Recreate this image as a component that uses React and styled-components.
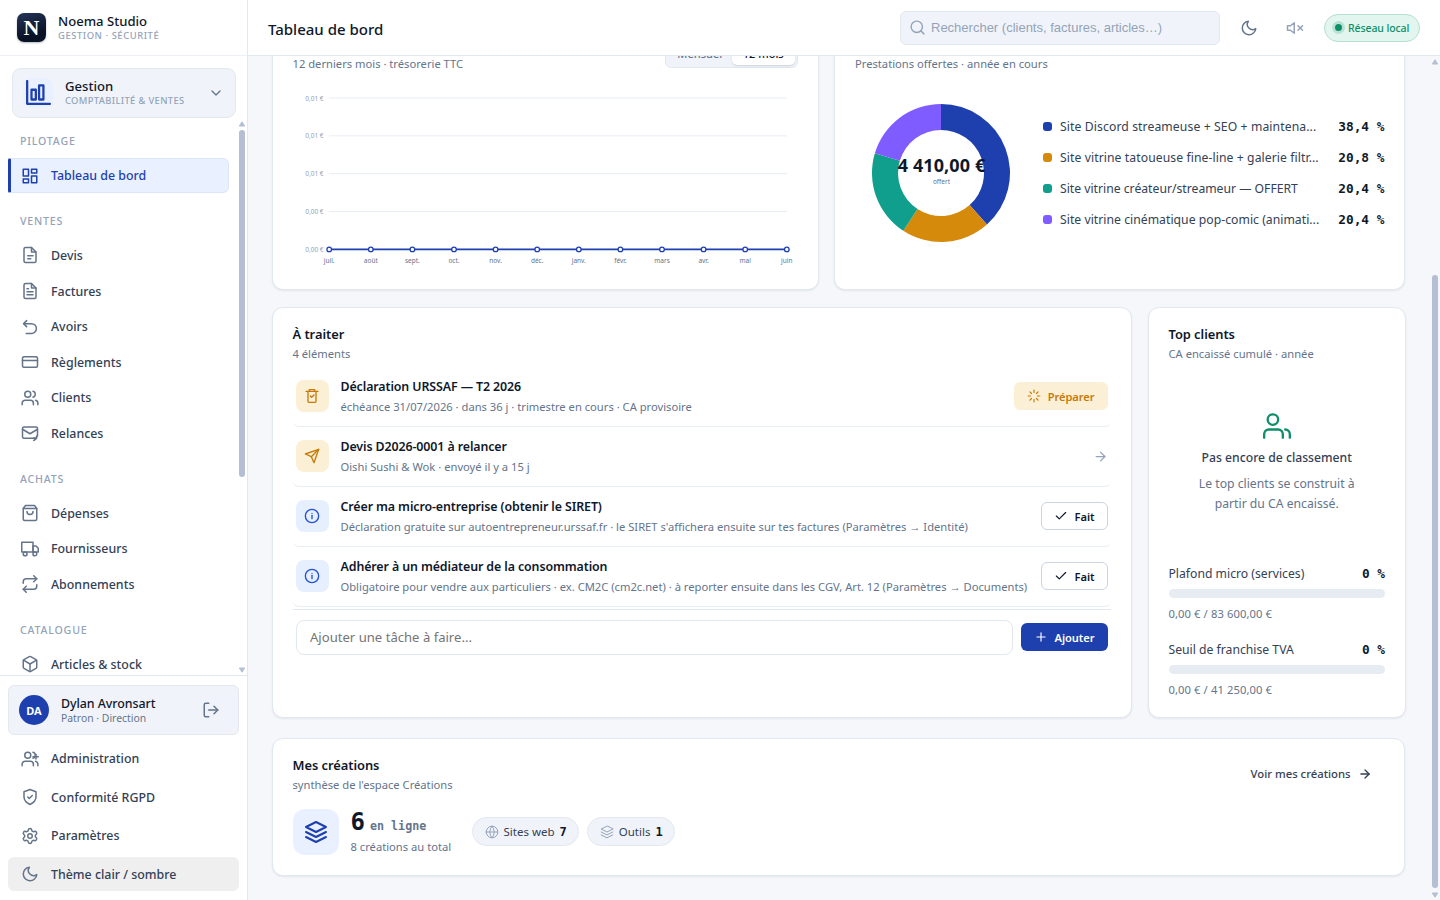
import { styled, createGlobalStyle, css } from 'styled-components';

const sans = `'Noto Sans', 'Open Sans', sans-serif`;
const mono = `'DejaVu Sans Mono', 'Liberation Mono', monospace`;

const color = {
  blue: '#1e40af',
  ink: '#0f172a',
  text: '#334155',
  muted: '#64748b',
  soft: '#94a3b8',
  line: '#e2e8f0',
  panel: '#f0f4fa',
  tint: '#e9f0ff',
  amber: '#c77a08',
  amberBg: '#fbefd5',
  green: '#0f8f69',
};

const icons = {
  dashboard: ['M3 3h7v9H3z', 'M14 3h7v5h-7z', 'M14 12h7v9h-7z', 'M3 16h7v5H3z'],
  quote: ['M14 2H6a2 2 0 0 0-2 2v16a2 2 0 0 0 2 2h12a2 2 0 0 0 2-2V8z', 'M14 2v6h6', 'M9 13h7', 'M9 17h4'],
  invoice: ['M14 2H6a2 2 0 0 0-2 2v16a2 2 0 0 0 2 2h12a2 2 0 0 0 2-2V8z', 'M14 2v6h6', 'M8 13h8', 'M8 17h8', 'M8 9h2'],
  undo: ['M7.5 3.5l-4 4 4 4', 'M3.5 7.5H14a6.5 6.5 0 0 1 0 13H7'],
  card: ['M4 5h16a2 2 0 0 1 2 2v10a2 2 0 0 1-2 2H4a2 2 0 0 1-2-2V7a2 2 0 0 1 2-2z', 'M2 10h20'],
  users: ['M5 7a4 4 0 1 0 8 0a4 4 0 1 0-8 0', 'M1.5 21v-2a4 4 0 0 1 4-4h7a4 4 0 0 1 4 4v2', 'M16 3.13a4 4 0 0 1 0 7.75', 'M22.5 21v-2a4 4 0 0 0-3-3.87'],
  admin: ['M5 7a4 4 0 1 0 8 0a4 4 0 1 0-8 0', 'M1.5 21v-2a4 4 0 0 1 4-4h7a4 4 0 0 1 4 4v2', 'M16 3.13a4 4 0 0 1 0 7.75', 'M16 9h7', 'M20 6v6', 'M22.5 21v-2a4 4 0 0 0-3-3.87'],
  mail: ['M18 19H4a2 2 0 0 1-2-2V6a2 2 0 0 1 2-2h16a2 2 0 0 1 2 2v10', 'M2 7l10 6 10-6', 'M21 16c0 3-1.5 5-4 6', 'M17 18.5h4'],
  bag: ['M6 2L3 6v14a2 2 0 0 0 2 2h14a2 2 0 0 0 2-2V6l-3-4z', 'M3 6h18', 'M16 10a4 4 0 0 1-8 0'],
  truck: ['M1 3h15v13H1z', 'M16 8h4l3 3v5h-7z', 'M3 18.5a2.5 2.5 0 1 0 5 0a2.5 2.5 0 1 0-5 0', 'M16 18.5a2.5 2.5 0 1 0 5 0a2.5 2.5 0 1 0-5 0'],
  repeat: ['M17 1l4 4-4 4', 'M3 11V9a4 4 0 0 1 4-4h14', 'M7 23l-4-4 4-4', 'M21 13v2a4 4 0 0 1-4 4H3'],
  box: ['M21 16V8a2 2 0 0 0-1-1.73l-7-4a2 2 0 0 0-2 0l-7 4A2 2 0 0 0 3 8v8a2 2 0 0 0 1 1.73l7 4a2 2 0 0 0 2 0l7-4A2 2 0 0 0 21 16z', 'M3.27 6.96L12 12.01l8.73-5.05', 'M12 22.08V12'],
  shield: ['M12 22s8-4 8-10V5l-8-3-8 3v7c0 6 8 10 8 10z', 'M9 12l2 2 4-4'],
  gear: [
    'M9 12a3 3 0 1 0 6 0a3 3 0 1 0-6 0',
    'M9.671 4.136a2.34 2.34 0 0 1 4.659 0 2.34 2.34 0 0 0 3.319 1.915 2.34 2.34 0 0 1 2.33 4.033 2.34 2.34 0 0 0 0 3.831 2.34 2.34 0 0 1-2.33 4.033 2.34 2.34 0 0 0-3.319 1.915 2.34 2.34 0 0 1-4.659 0 2.34 2.34 0 0 0-3.32-1.915 2.34 2.34 0 0 1-2.33-4.033 2.34 2.34 0 0 0 0-3.831A2.34 2.34 0 0 1 6.35 6.051a2.34 2.34 0 0 0 3.319-1.915',
  ],
  moon: ['M21 12.79A9 9 0 1 1 11.21 3 7 7 0 0 0 21 12.79z'],
  logout: ['M9 21H5a2 2 0 0 1-2-2V5a2 2 0 0 1 2-2h4', 'M16 17l5-5-5-5', 'M21 12H9'],
  ledger: ['M2 1v21h21', 'M6 9h4v9H6z', 'M13 5h4v13h-4z'],
  chevron: ['M6 9l6 6 6-6'],
  search: ['M3 11a8 8 0 1 0 16 0a8 8 0 1 0-16 0', 'M21 21l-4.3-4.3'],
  mute: ['M11 5L6 9H2v6h4l5 4z', 'M22 9l-6 6', 'M16 9l6 6'],
  tax: ['M3 5h18', 'M8 5V2.5h8V5', 'M6 5v15a1.5 1.5 0 0 0 1.5 1.5h9A1.5 1.5 0 0 0 18 20V5', 'M9.5 12l2 2 3.5-3.5'],
  send: ['M22 2L11 13', 'M22 2l-7 20-4-9-9-4z'],
  info: ['M2 12a10 10 0 1 0 20 0a10 10 0 1 0-20 0', 'M12 16v-5', 'M12 8h.01'],
  loader: ['M12 2v4', 'M12 18v4', 'M4.93 4.93l2.83 2.83', 'M16.24 16.24l2.83 2.83', 'M2 12h4', 'M18 12h4', 'M4.93 19.07l2.83-2.83', 'M16.24 7.76l2.83-2.83'],
  arrow: ['M5 12h14', 'M12 5l7 7-7 7'],
  check: ['M20 6L9 17l-5-5'],
  plus: ['M12 5v14', 'M5 12h14'],
  people: ['M4 6.5a4.5 4.5 0 1 0 9 0a4.5 4.5 0 1 0-9 0', 'M1 22v-3a4 4 0 0 1 4-4h8a4 4 0 0 1 4 4v3', 'M19 15a4 4 0 0 1 4 4v3'],
  layers: ['M12 2L2 7l10 5 10-5z', 'M2 17l10 5 10-5', 'M2 12l10 5 10-5'],
  globe: ['M2 12a10 10 0 1 0 20 0a10 10 0 1 0-20 0', 'M2 12h20', 'M12 2a15 15 0 0 1 0 20a15 15 0 0 1 0-20'],
};

const Icon = ({ name, size = 18, stroke = 2 }) => (
  <Glyph width={size} height={size} viewBox="0 0 24 24" strokeWidth={stroke}>
    {icons[name].map((d) => (
      <path key={d} d={d} />
    ))}
  </Glyph>
);

const ScrollBar = ({ before, size, wide }) => (
  <Track $wide={wide}>
    <Arrow width="8" height="6" viewBox="0 0 8 6">
      <path d="M4 .8L6.7 5H1.3z" />
    </Arrow>
    <Gap $size={before} />
    <Thumb $size={size} />
    <Gap />
    <Arrow width="8" height="6" viewBox="0 0 8 6">
      <path d="M4 5.2L6.7 1H1.3z" />
    </Arrow>
  </Track>
);

const menu = [
  { label: 'PILOTAGE', items: [['dashboard', 'Tableau de bord', true]] },
  {
    label: 'VENTES',
    items: [
      ['quote', 'Devis'],
      ['invoice', 'Factures'],
      ['undo', 'Avoirs'],
      ['card', 'Règlements'],
      ['users', 'Clients'],
      ['mail', 'Relances'],
    ],
  },
  {
    label: 'ACHATS',
    items: [
      ['bag', 'Dépenses'],
      ['truck', 'Fournisseurs'],
      ['repeat', 'Abonnements'],
    ],
  },
  { label: 'CATALOGUE', items: [['box', 'Articles & stock']] },
];

const footerMenu = [
  ['admin', 'Administration'],
  ['shield', 'Conformité RGPD'],
  ['gear', 'Paramètres'],
  ['moon', 'Thème clair / sombre', true],
];

const Sidebar = () => (
  <SidebarContainer>
    <Brand>
      <Logo>N</Logo>
      <BrandText>
        <BrandName>Noema Studio</BrandName>
        <Caps>GESTION · SÉCURITÉ</Caps>
      </BrandText>
    </Brand>
    <ModuleCard>
      <ModuleIcon>
        <Icon name="ledger" size={26} stroke={2.1} />
      </ModuleIcon>
      <BrandText>
        <BrandName>Gestion</BrandName>
        <Caps $tight>COMPTABILITÉ & VENTES</Caps>
      </BrandText>
      <Icon name="chevron" size={16} stroke={2} />
    </ModuleCard>
    <NavArea>
      <Nav>
        {menu.map((group) => (
          <NavGroup key={group.label}>
            <NavLabel>{group.label}</NavLabel>
            {group.items.map(([icon, label, active]) => (
              <NavItem key={label} $active={active}>
                <Icon name={icon} />
                {label}
              </NavItem>
            ))}
          </NavGroup>
        ))}
      </Nav>
      <ScrollBar before={3} size={347} />
    </NavArea>
    <SidebarFooter>
      <UserCard>
        <Avatar>DA</Avatar>
        <UserText>
          <UserName>Dylan Avronsart</UserName>
          <UserRole>Patron · Direction</UserRole>
        </UserText>
        <Icon name="logout" />
      </UserCard>
      {footerMenu.map(([icon, label, hover]) => (
        <FooterItem key={label} $hover={hover}>
          <Icon name={icon} />
          {label}
        </FooterItem>
      ))}
    </SidebarFooter>
  </SidebarContainer>
);

const Header = () => (
  <HeaderContainer>
    <PageTitle>Tableau de bord</PageTitle>
    <Search>
      <Icon name="search" size={17} stroke={2} />
      Rechercher (clients, factures, articles…)
    </Search>
    <HeaderBtn>
      <Icon name="moon" size={18} />
    </HeaderBtn>
    <HeaderBtn $muted>
      <Icon name="mute" size={18} />
    </HeaderBtn>
    <Network>
      <Dot />
      Réseau local
    </Network>
  </HeaderContainer>
);

const months = ['juil.', 'août', 'sept.', 'oct.', 'nov.', 'déc.', 'janv.', 'févr.', 'mars', 'avr.', 'mai', 'juin'];
const ticks = ['0,01 €', '0,01 €', '0,01 €', '0,00 €', '0,00 €'];

const LineChart = () => {
  const x = (i) => 36.2 + i * 41.6;
  const y = (i) => 14 + i * 37.85;
  return (
    <ChartSvg width="505" height="190" viewBox="0 0 505 190">
      {ticks.map((tick, i) => (
        <g key={i}>
          <line x1="36" x2="494" y1={y(i)} y2={y(i)} stroke="#e8edf3" />
          <AxisText x="30.6" y={y(i) + 2.6} textAnchor="end" $light>
            {tick}
          </AxisText>
        </g>
      ))}
      <line x1="36" x2="494" y1={y(4)} y2={y(4)} stroke={color.blue} strokeWidth="1.6" />
      {months.map((month, i) => (
        <g key={month}>
          <circle cx={x(i)} cy={y(4)} r="2.3" fill="#fff" stroke={color.blue} strokeWidth="1.3" />
          <AxisText x={x(i)} y="179" textAnchor="middle">
            {month}
          </AxisText>
        </g>
      ))}
    </ChartSvg>
  );
};

const shares = [
  { label: 'Site Discord streameuse + SEO + maintena...', value: 38.4, fill: '#1e40af', spacing: 0.1 },
  { label: 'Site vitrine tatoueuse fine-line + galerie filtr...', value: 20.8, fill: '#d68a0c', spacing: 0.08 },
  { label: 'Site vitrine créateur/streameur — OFFERT', value: 20.4, fill: '#109f8c', spacing: 0 },
  { label: 'Site vitrine cinématique pop-comic (animati...', value: 20.4, fill: '#7f5cff', spacing: 0.03 },
];

const Donut = () => {
  const point = (r, pct) => {
    const a = (pct / 100) * Math.PI * 2;
    return `${70 + r * Math.sin(a)} ${70 - r * Math.cos(a)}`;
  };
  let from = 0;
  return (
    <DonutSvg width="140" height="140" viewBox="0 0 140 140">
      {shares.map(({ label, value, fill }) => {
        const start = from;
        from += value;
        return (
          <path
            key={label}
            fill={fill}
            d={`M${point(69, start)}A69 69 0 0 1 ${point(69, from)}L${point(43, from)}A43 43 0 0 0 ${point(43, start)}Z`}
          />
        );
      })}
      <DonutTotal x="70.5" y="68.5" textAnchor="middle">
        4 410,00 €
      </DonutTotal>
      <AxisText x="70.5" y="81" textAnchor="middle">
        offert
      </AxisText>
    </DonutSvg>
  );
};

const tasks = [
  { icon: 'tax', tone: 'amber', title: 'Déclaration URSSAF — T2 2026', sub: 'échéance 31/07/2026 · dans 36 j · trimestre en cours · CA provisoire', action: 'prepare' },
  { icon: 'send', tone: 'amber', title: 'Devis D2026-0001 à relancer', sub: 'Oishi Sushi & Wok · envoyé il y a 15 j', action: 'open' },
  {
    icon: 'info',
    tone: 'blue',
    title: 'Créer ma micro-entreprise (obtenir le SIRET)',
    sub: "Déclaration gratuite sur autoentrepreneur.urssaf.fr · le SIRET s'affichera ensuite sur tes factures (Paramètres → Identité)",
    action: 'done',
  },
  {
    icon: 'info',
    tone: 'blue',
    title: 'Adhérer à un médiateur de la consommation',
    sub: 'Obligatoire pour vendre aux particuliers · ex. CM2C (cm2c.net) · à reporter ensuite dans les CGV, Art. 12 (Paramètres → Documents)',
    action: 'done',
  },
];

const TaskAction = ({ action }) => {
  if (action === 'prepare')
    return (
      <Button $kind="amber">
        <Icon name="loader" size={14} stroke={2} />
        Préparer
      </Button>
    );
  if (action === 'open')
    return (
      <OpenMark>
        <Icon name="arrow" size={15} stroke={2} />
      </OpenMark>
    );
  return (
    <Button $kind="outline">
      <Icon name="check" size={14} stroke={2} />
      Fait
    </Button>
  );
};

const limits = [
  { label: 'Plafond micro (services)', detail: '0,00 € / 83 600,00 €' },
  { label: 'Seuil de franchise TVA', detail: '0,00 € / 41 250,00 €' },
];

const Dashboard = () => (
  <Board>
    <ChartRow>
      <Card $cut>
        <CutHead>
          <CardSub>12 derniers mois · trésorerie TTC</CardSub>
          <Segment>
            <SegmentItem>Mensuel</SegmentItem>
            <SegmentItem $on>12 mois</SegmentItem>
          </Segment>
        </CutHead>
        <LineChart />
      </Card>
      <Card $cut>
        <CutHead>
          <CardSub>Prestations offertes · année en cours</CardSub>
        </CutHead>
        <OffersBody>
          <Donut />
          <Legend>
            {shares.map(({ label, value, fill, spacing }) => (
              <LegendRow key={label}>
                <Swatch $fill={fill} />
                <LegendLabel $spacing={spacing}>{label}</LegendLabel>
                <MonoValue>{value.toFixed(1).replace('.', ',')} %</MonoValue>
              </LegendRow>
            ))}
          </Legend>
        </OffersBody>
      </Card>
    </ChartRow>
    <TaskRow>
      <Card>
        <CardTitle>À traiter</CardTitle>
        <CardSub>4 éléments</CardSub>
        <TaskList>
          {tasks.map(({ icon, tone, title, sub, action }) => (
            <Task key={title}>
              <TaskIcon $tone={tone}>
                <Icon name={icon} size={16} stroke={2} />
              </TaskIcon>
              <TaskText>
                <TaskTitle>{title}</TaskTitle>
                <TaskSub>{sub}</TaskSub>
              </TaskText>
              <TaskAction action={action} />
            </Task>
          ))}
        </TaskList>
        <AddTask>
          <TaskInput placeholder="Ajouter une tâche à faire..." />
          <Button $kind="primary">
            <Icon name="plus" size={14} stroke={2} />
            Ajouter
          </Button>
        </AddTask>
      </Card>
      <Card>
        <CardTitle>Top clients</CardTitle>
        <CardSub>CA encaissé cumulé · année</CardSub>
        <Empty>
          <Icon name="people" size={28} stroke={2} />
          <EmptyTitle>Pas encore de classement</EmptyTitle>
          <EmptyText>
            Le top clients se construit à
            <br />
            partir du CA encaissé.
          </EmptyText>
        </Empty>
        <Limits>
          {limits.map(({ label, detail }) => (
            <Limit key={label}>
              <LimitHead>
                {label}
                <MonoValue>0 %</MonoValue>
              </LimitHead>
              <Gauge />
              <LimitDetail>{detail}</LimitDetail>
            </Limit>
          ))}
        </Limits>
      </Card>
    </TaskRow>
    <Card $creations>
      <CreationsHead>
        <div>
          <CardTitle>Mes créations</CardTitle>
          <CardSub>synthèse de l'espace Créations</CardSub>
        </div>
        <SeeAll>
          Voir mes créations
          <Icon name="arrow" size={14} stroke={2.3} />
        </SeeAll>
      </CreationsHead>
      <CreationsBody>
        <CreationsIcon>
          <Icon name="layers" size={24} stroke={2} />
        </CreationsIcon>
        <CreationsText>
          <Online>
            6<small>en ligne</small>
          </Online>
          <CardSub>8 créations au total</CardSub>
        </CreationsText>
        <Chip>
          <Icon name="globe" size={14} stroke={1.7} />
          Sites web
          <b>7</b>
        </Chip>
        <Chip>
          <Icon name="layers" size={14} stroke={1.7} />
          Outils
          <b>1</b>
        </Chip>
      </CreationsBody>
    </Card>
  </Board>
);

export default function App() {
  return (
    <>
      <GlobalStyle />
      <Page>
        <Sidebar />
        <Main>
          <Header />
          <Content>
            <Dashboard />
            <ScrollBar before={210} size={613} wide />
          </Content>
        </Main>
      </Page>
    </>
  );
}

const GlobalStyle = createGlobalStyle`
  * {
    box-sizing: border-box;
  }
  body {
    margin: 0;
    font-family: ${sans};
    color: ${color.text};
    background: #f5f7fb;
  }
`;

const Page = styled.div`
  display: flex;
  width: 1440px;
  height: 900px;
  overflow: hidden;
`;

const Glyph = styled.svg`
  flex: none;
  fill: none;
  stroke: currentColor;
  stroke-linecap: round;
  stroke-linejoin: round;
`;

const Track = styled.div`
  flex: none;
  display: flex;
  flex-direction: column;
  align-items: center;
  width: ${({ $wide }) => ($wide ? 10 : 9)}px;
  padding: ${({ $wide }) => ($wide ? '3px 0 2px' : '3px 1px 2px 0')};
`;

const Arrow = styled.svg`
  flex: none;
  fill: #b4bfd3;
  stroke: #b4bfd3;
  stroke-linejoin: round;
`;

const Gap = styled.div`
  ${({ $size }) => ($size ? `height: ${$size}px;` : 'flex: 1;')}
`;

const Thumb = styled.div`
  flex: none;
  width: 6px;
  height: ${({ $size }) => $size}px;
  border-radius: 3px;
  background: #b4bfd3;
`;

const SidebarContainer = styled.aside`
  flex: none;
  display: flex;
  flex-direction: column;
  width: 248px;
  background: #fff;
  border-right: 1px solid ${color.line};
`;

const Brand = styled.div`
  display: flex;
  align-items: center;
  gap: 12px;
  height: 56px;
  padding-left: 17px;
  border-bottom: 1px solid #edf1f6;
`;

const Logo = styled.div`
  display: flex;
  align-items: center;
  justify-content: center;
  width: 29px;
  height: 29px;
  border-radius: 7px;
  background: linear-gradient(160deg, #24355a, #0a1226 70%);
  box-shadow: 0 1px 2px rgba(15, 23, 42, 0.3);
  color: #fff;
  font: bold 22px 'Liberation Serif', serif;
`;

const BrandText = styled.div`
  display: flex;
  flex-direction: column;
`;

const BrandName = styled.div`
  font-size: 13.1px;
  font-weight: 500;
  line-height: 15px;
  color: ${color.ink};
`;

const Caps = styled.div`
  font-size: 9.4px;
  font-weight: 500;
  line-height: 13px;
  letter-spacing: ${({ $tight }) => ($tight ? '0.35px' : '0.58px')};
  color: ${color.soft};
`;

const ModuleCard = styled.div`
  display: flex;
  align-items: center;
  height: 50px;
  margin: 12px 11px 0 12px;
  padding: 0 11px 0 10px;
  gap: 12px;
  border: 1px solid ${color.line};
  border-radius: 9px;
  background: ${color.panel};
  color: ${color.muted};

  > :last-child {
    margin-left: auto;
  }
`;

const ModuleIcon = styled.div`
  display: flex;
  align-items: center;
  justify-content: center;
  width: 30px;
  height: 30px;
  border-radius: 8px;
  background: ${color.tint};
  color: ${color.blue};
`;

const NavArea = styled.div`
  display: flex;
  flex: 1;
  min-height: 0;
`;

const Nav = styled.nav`
  flex: 1;
  padding: 2px 9px 0 8px;
  overflow: hidden;
`;

const NavGroup = styled.div`
  display: flex;
  flex-direction: column;
  margin-bottom: 5.8px;
`;

const NavLabel = styled.div`
  padding: 12px 12px 8.4px;
  font-size: 10.6px;
  font-weight: 500;
  line-height: 18px;
  letter-spacing: 0.8px;
  color: ${color.soft};
`;

const itemBase = css`
  display: flex;
  align-items: center;
  gap: 12px;
  font-size: 12.4px;
  font-weight: 500;
  color: ${color.text};

  svg {
    color: ${color.muted};
  }
`;

const NavItem = styled.div`
  ${itemBase}
  height: 34.6px;
  margin-bottom: 1px;
  padding-left: 13px;
  border-radius: 6px;
  ${({ $active }) =>
    $active &&
    css`
      padding-left: 10px;
      border: 1px solid #dce6fb;
      border-left: 3px solid ${color.blue};
      border-radius: 2px 6px 6px 2px;
      background: ${color.tint};
      color: ${color.blue};
      svg {
        color: ${color.blue};
      }
    `}
`;

const SidebarFooter = styled.div`
  display: flex;
  flex-direction: column;
  gap: 4.5px;
  height: 225px;
  padding: 9px 8px 0;
  border-top: 1px solid ${color.line};
`;

const FooterItem = styled.div`
  ${itemBase}
  height: 34px;
  padding-left: 13px;
  border-radius: 6px;
  background: ${({ $hover }) => ($hover ? '#efefef' : 'transparent')};
`;

const UserCard = styled.div`
  display: flex;
  align-items: center;
  height: 50px;
  margin-bottom: 2px;
  padding: 0 18px 0 10px;
  gap: 12px;
  border: 1px solid ${color.line};
  border-radius: 6px;
  background: ${color.panel};
  color: ${color.muted};
`;

const Avatar = styled.div`
  display: flex;
  align-items: center;
  justify-content: center;
  width: 30px;
  height: 30px;
  border-radius: 50%;
  background: ${color.blue};
  color: #fff;
  font-size: 11px;
  font-weight: 700;
`;

const UserText = styled.div`
  flex: 1;
`;

const UserName = styled.div`
  font-size: 12.4px;
  font-weight: 500;
  line-height: 16px;
  letter-spacing: -0.05px;
  color: ${color.ink};
`;

const UserRole = styled.div`
  font-size: 10.4px;
  line-height: 13px;
  color: ${color.muted};
`;

const Main = styled.main`
  display: flex;
  flex: 1;
  flex-direction: column;
  min-width: 0;
`;

const HeaderContainer = styled.header`
  flex: none;
  display: flex;
  align-items: center;
  height: 56px;
  padding: 0 20px;
  border-bottom: 1px solid ${color.line};
  background: #fff;
`;

const PageTitle = styled.h1`
  flex: 1;
  margin: 2px 0 0;
  font-size: 15px;
  font-weight: 500;
  color: ${color.ink};
`;

const Search = styled.div`
  display: flex;
  align-items: center;
  gap: 5px;
  width: 320px;
  height: 34px;
  padding-left: 8px;
  border: 1px solid ${color.line};
  border-radius: 6px;
  background: ${color.panel};
  color: ${color.soft};
  font: 13px 'Liberation Sans', Arial, sans-serif;
`;

const HeaderBtn = styled.div`
  display: flex;
  justify-content: center;
  width: 34px;
  margin-left: 12px;
  color: ${({ $muted }) => ($muted ? color.soft : color.muted)};
`;

const Network = styled.div`
  display: flex;
  align-items: center;
  gap: 6px;
  width: 96px;
  height: 28px;
  margin-left: 12px;
  padding-left: 10px;
  border: 1px solid #b5e0d0;
  border-radius: 14px;
  background: #e2f5ee;
  color: ${color.green};
  font-size: 10.5px;
  font-weight: 500;
  letter-spacing: -0.1px;
  white-space: nowrap;
`;

const Dot = styled.span`
  width: 7px;
  height: 7px;
  border-radius: 50%;
  background: ${color.green};
  box-shadow: 0 0 0 3px #b9e2d4;
`;

const Content = styled.div`
  display: flex;
  flex: 1;
  min-height: 0;
  overflow: hidden;
`;

const Board = styled.div`
  display: flex;
  flex: 1;
  flex-direction: column;
  min-width: 0;
  margin-top: -27px;
  padding-left: 23.5px;
`;

const ChartRow = styled.div`
  flex: none;
  display: grid;
  grid-template-columns: 547px 571px;
  gap: 15.5px;
  height: 261px;
`;

const TaskRow = styled.div`
  flex: none;
  display: grid;
  grid-template-columns: 860px 258px;
  gap: 16px;
  height: 411.4px;
  margin: 16.6px 0 20px;
`;

const Card = styled.section`
  display: flex;
  flex: none;
  flex-direction: column;
  min-width: 0;
  width: ${({ $creations }) => ($creations ? '1133.5px' : 'auto')};
  height: ${({ $creations }) => ($creations ? '138.4px' : 'auto')};
  padding: ${({ $cut }) => ($cut ? '8.5px' : '16.4px')} 19.5px 0 20px;
  border: 1px solid ${color.line};
  border-radius: 11px;
  background: #fff;
  box-shadow: 0 1px 2px rgba(15, 23, 42, 0.08);
`;

const CardTitle = styled.h2`
  margin: 0;
  font-size: 12.9px;
  font-weight: 600;
  line-height: 21px;
  letter-spacing: -0.05px;
  color: ${color.ink};
`;

const CardSub = styled.div`
  font-size: 11.2px;
  line-height: 18px;
  color: ${color.muted};
`;

const CutHead = styled.div`
  display: flex;
  align-items: flex-end;
  justify-content: space-between;
  height: 34px;
`;

const Segment = styled.div`
  display: flex;
  align-items: center;
  align-self: flex-start;
  width: 133px;
  height: 29px;
  padding: 2px;
  border: 1px solid ${color.line};
  border-radius: 6px;
  background: ${color.panel};
`;

const SegmentItem = styled.div`
  flex: 1;
  font-size: 11px;
  font-weight: 500;
  line-height: 23px;
  text-align: center;
  border-radius: 5px;
  color: ${color.muted};
  ${({ $on }) =>
    $on &&
    css`
      background: #fff;
      box-shadow: 0 1px 2px rgba(15, 23, 42, 0.15);
      color: ${color.ink};
    `}
`;

const ChartSvg = styled.svg`
  flex: none;
  margin-top: 11.5px;
`;

const AxisText = styled.text`
  font-size: 6.5px;
  fill: ${({ $light }) => ($light ? color.soft : color.muted)};
`;

const DonutSvg = styled.svg`
  flex: none;
  overflow: visible;
`;

const DonutTotal = styled.text`
  font-size: 18px;
  font-weight: 700;
  letter-spacing: 0.1px;
  fill: ${color.ink};
`;

const OffersBody = styled.div`
  display: flex;
  align-items: center;
  gap: 32px;
  margin-top: 30.3px;
  padding-left: 16px;
`;

const Legend = styled.div`
  flex: 1;
  min-width: 0;
`;

const LegendRow = styled.div`
  display: flex;
  align-items: center;
  height: 31px;
`;

const Swatch = styled.span`
  flex: none;
  width: 9px;
  height: 9px;
  margin-right: 8px;
  border-radius: 3px;
  background: ${({ $fill }) => $fill};
`;

const LegendLabel = styled.span`
  flex: 1;
  font-size: 12.2px;
  letter-spacing: ${({ $spacing }) => $spacing}px;
  white-space: nowrap;
  color: ${color.text};
`;

const MonoValue = styled.span`
  flex: none;
  font: bold 12.8px ${mono};
  color: ${color.ink};
`;

const TaskList = styled.div`
  margin-top: 3.6px;
`;

const Task = styled.div`
  display: flex;
  align-items: center;
  gap: 12px;
  height: 60px;
  padding: 0 3.5px;
  border-bottom: 1px solid #e8edf4;
  border-radius: 6px;
`;

const TaskIcon = styled.div`
  display: flex;
  align-items: center;
  justify-content: center;
  width: 32.5px;
  height: 32px;
  border-radius: 8px;
  background: ${({ $tone }) => ($tone === 'amber' ? color.amberBg : '#e6effd')};
  color: ${({ $tone }) => ($tone === 'amber' ? color.amber : '#2450cf')};
`;

const TaskText = styled.div`
  flex: 1;
  min-width: 0;
`;

const TaskTitle = styled.div`
  font-size: 12.4px;
  font-weight: 600;
  line-height: 21px;
  letter-spacing: -0.1px;
  color: ${color.ink};
`;

const TaskSub = styled.div`
  font-size: 11.2px;
  line-height: 20px;
  white-space: nowrap;
  color: ${color.muted};
`;

const buttonKinds = {
  amber: css`
    background: ${color.amberBg};
    color: ${color.amber};
  `,
  outline: css`
    border-color: #cbd5e1;
    background: #fff;
    color: ${color.ink};
  `,
  primary: css`
    background: ${color.blue};
    color: #fff;
  `,
};

const Button = styled.button`
  flex: none;
  display: flex;
  align-items: center;
  gap: 7px;
  height: 28px;
  padding: 0 12px 0 11.5px;
  border: 1px solid transparent;
  border-radius: 6px;
  font: 600 11.1px ${sans};
  letter-spacing: -0.05px;
  ${({ $kind }) => buttonKinds[$kind]}
`;

const OpenMark = styled.span`
  display: flex;
  color: ${color.soft};
`;

const AddTask = styled.div`
  display: flex;
  align-items: center;
  gap: 8px;
  margin-top: 2px;
  padding: 10px 3.5px 0;
  border-top: 1px solid ${color.line};
`;

const TaskInput = styled.input`
  flex: 1;
  height: 35px;
  padding: 0 13px;
  border: 1px solid ${color.line};
  border-radius: 8px;
  font: 13.1px ${sans};

  &::placeholder {
    color: #757575;
  }
`;

const Empty = styled.div`
  display: flex;
  flex-direction: column;
  align-items: center;
  padding-top: 49px;
  color: ${color.green};
`;

const EmptyTitle = styled.div`
  margin: 8px 0 6px;
  font-size: 12.2px;
  font-weight: 500;
  line-height: 20px;
  color: ${color.text};
`;

const EmptyText = styled.div`
  font-size: 12.2px;
  line-height: 20px;
  text-align: center;
  color: ${color.muted};
`;

const Limits = styled.div`
  display: flex;
  flex-direction: column;
  margin-top: 49.5px;
  gap: 17.5px;
`;

const Limit = styled.div`
  display: flex;
  flex-direction: column;
`;

const LimitHead = styled.div`
  display: flex;
  align-items: center;
  justify-content: space-between;
  height: 20px;
  font-size: 12.2px;
`;

const Gauge = styled.div`
  height: 9px;
  margin: 6px 0 6.3px;
  border-radius: 5px;
  background: #e7ecf3;
`;

const LimitDetail = styled.div`
  font-size: 11.2px;
  line-height: 17px;
  letter-spacing: 0.1px;
  color: ${color.muted};
`;

const CreationsHead = styled.div`
  display: flex;
  justify-content: space-between;
`;

const SeeAll = styled.div`
  display: flex;
  align-items: center;
  gap: 7px;
  height: 37px;
  padding-right: 13px;
  font-size: 11.3px;
  font-weight: 500;
  color: ${color.text};
`;

const CreationsBody = styled.div`
  display: flex;
  align-items: center;
  gap: 8px;
  margin-top: 13.6px;
`;

const CreationsIcon = styled.div`
  display: flex;
  align-items: center;
  justify-content: center;
  width: 46px;
  height: 46px;
  border-radius: 12px;
  background: ${color.tint};
  color: ${color.blue};
`;

const CreationsText = styled.div`
  width: 117px;
  padding-left: 4px;
`;

const Online = styled.div`
  padding-top: 3px;
  font: bold 24px/23px ${mono};
  color: ${color.ink};

  small {
    margin-left: 5px;
    font-size: 11.7px;
    color: ${color.muted};
  }
`;

const Chip = styled.div`
  display: flex;
  align-items: center;
  gap: 5px;
  height: 29px;
  padding: 0 11px 0 12px;
  border: 1px solid ${color.line};
  border-radius: 15px;
  background: ${color.panel};
  font-size: 11.5px;
  color: ${color.text};

  svg {
    color: ${color.soft};
  }

  b {
    font: bold 12px ${mono};
    color: ${color.ink};
  }
`;
